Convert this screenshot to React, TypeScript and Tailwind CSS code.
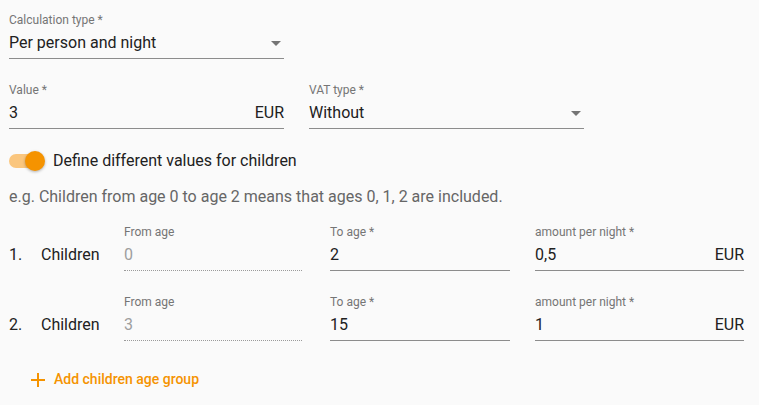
import React from "react";

const ORANGE = "#f59300";

function Caret() {
  return (
    <svg width="10" height="5" viewBox="0 0 10 5" className="mr-[3px]">
      <path d="M0 0L5 5L10 0Z" fill="#757575" />
    </svg>
  );
}

interface FieldProps {
  label: string;
  value: string;
  width: string;
  suffix?: string;
  select?: boolean;
  disabled?: boolean;
}

function Field({ label, value, width, suffix, select, disabled }: FieldProps) {
  return (
    <div className={`flex flex-col ${width}`}>
      <div className="h-[14px] text-[12px] leading-[14px] text-[#757575]">{label}</div>
      <div
        className={`mt-[4px] box-content flex h-[24px] items-center justify-between pb-[3px] ${
          disabled ? "border-b border-dotted border-[#9a9a9a]" : "border-b border-[#8c8c8c]"
        }`}
      >
        <span className={`text-[16px] leading-[24px] ${disabled ? "text-[#9e9e9e]" : "text-[#212121]"}`}>
          {value}
        </span>
        {suffix && <span className="text-[16px] leading-[24px] text-[#212121]">{suffix}</span>}
        {select && <Caret />}
      </div>
    </div>
  );
}

function ChildRow({ n, from, to, amount }: { n: number; from: string; to: string; amount: string }) {
  return (
    <div className="flex items-start">
      <div className="mt-[18px] flex h-[24px] w-[115px] items-center text-[16px] text-[#212121]">
        <span className="w-[32px]">{n}.</span>
        <span>Children</span>
      </div>
      <Field label="From age" value={from} width="w-[178px]" disabled />
      <div className="w-[28px]" />
      <Field label="To age *" value={to} width="w-[180px]" />
      <div className="w-[25px]" />
      <Field label="amount per night *" value={amount} width="w-[209px]" suffix="EUR" />
    </div>
  );
}

export default function App() {
  return (
    <div
      className="h-[405px] w-[759px] overflow-hidden bg-[#fafafa] pl-[9px] pt-[13px]"
      style={{ fontFamily: "Roboto, 'Noto Sans', sans-serif" }}
    >
      <Field label="Calculation type *" value="Per person and night" width="w-[275px]" select />

      <div className="mt-[24px] flex gap-[25px]">
        <Field label="Value *" value="3" width="w-[275px]" suffix="EUR" />
        <Field label="VAT type *" value="Without" width="w-[275px]" select />
      </div>

      <div className="mt-[21px] flex h-[22px] items-center">
        <div className="relative h-[14px] w-[34px]">
          <div className="h-[14px] w-[34px] rounded-full bg-[#fac67e]" />
          <div className="absolute -top-[3px] left-[16px] h-[20px] w-[20px] rounded-full bg-[#f59300] shadow-[0_1px_3px_rgba(0,0,0,0.3)]" />
        </div>
        <span className="ml-[10px] text-[16px] text-[#212121]">Define different values for children</span>
      </div>

      <div className="mt-[15px] text-[16px] leading-[20px] text-[#666666]">
        e.g. Children from age 0 to age 2 means that ages 0, 1, 2 are included.
      </div>

      <div className="mt-[18px] flex flex-col gap-[24px]">
        <ChildRow n={1} from="0" to="2" amount="0,5" />
        <ChildRow n={2} from="3" to="15" amount="1" />
      </div>

      <div className="mt-[28px] flex items-center pl-[21px]">
        <svg width="16" height="16" viewBox="0 0 16 16">
          <path d="M8 1V15M1 8H15" stroke={ORANGE} strokeWidth="2" />
        </svg>
        <span className="ml-[8px] text-[14px] font-medium text-[#f59300]">Add children age group</span>
      </div>
    </div>
  );
}
